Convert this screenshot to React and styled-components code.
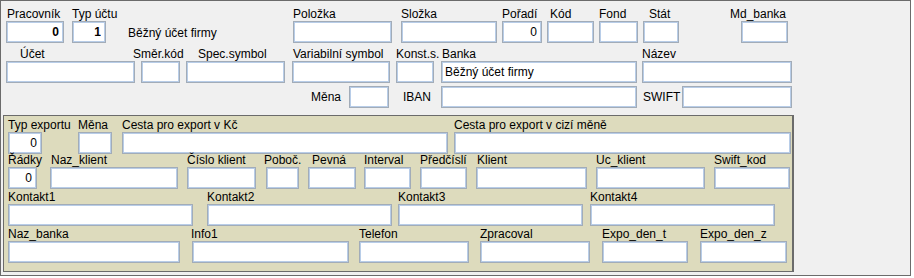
import React from 'react';
import styled, { createGlobalStyle } from 'styled-components';

const Global = createGlobalStyle`
	body {
		margin: 0;
		background: #fff;
		font-family: "Liberation Sans", Arial, sans-serif;
		font-size: 12px;
		color: #000;
	}
`;

const Frame = styled.div`
	box-sizing: border-box;
	width: 911px;
	height: 276px;
	border: 1px solid #6b6b6b;
	background: #f0f0f0;
	padding-top: 6px;
`;

const Row = styled.div`
	display: flex;
	align-items: ${p => (p.$center ? 'center' : 'flex-end')};
	margin-top: ${p => p.$mt || 0}px;
`;

const FieldBox = styled.div`
	display: flex;
	flex-direction: column;
	flex: none;
	width: ${p => p.$w}px;
	margin-left: ${p => p.$ml}px;
`;

const Label = styled.span`
	display: block;
	height: 14px;
	line-height: 14px;
	white-space: nowrap;
	margin-left: ${p => p.$lx || 0}px;
`;

const Input = styled.input`
	box-sizing: border-box;
	width: 100%;
	height: 22px;
	margin: 0;
	padding: 0 ${p => (p.$right ? 4 : 2)}px 0 3px;
	border: 1px solid #a2acb8;
	box-shadow: inset 0 0 0 1px #b8cde8;
	background: #fff;
	outline: none;
	font-family: "Liberation Sans", Arial, sans-serif;
	font-size: 12px;
	font-weight: ${p => (p.$bold ? 700 : 400)};
	color: #000;
	text-align: ${p => (p.$right ? 'right' : 'left')};
`;

const Note = styled.span`
	box-sizing: border-box;
	flex: none;
	width: ${p => p.$w}px;
	height: 22px;
	margin-left: ${p => p.$ml}px;
	padding-top: 5px;
	line-height: 14px;
	white-space: nowrap;
`;

const InlineBox = styled.div`
	display: flex;
	align-items: center;
	flex: none;
	margin-left: ${p => p.$ml}px;
`;

const InlineLabel = styled.span`
	width: ${p => p.$lw}px;
	line-height: 14px;
	white-space: nowrap;
`;

const InlineInput = styled(Input)`
	width: ${p => p.$w}px;
`;

const Panel = styled.div`
	box-sizing: border-box;
	width: 791px;
	height: 157px;
	margin: 7px 0 0 2px;
	padding: 2px 0 0 0;
	border: 1px solid #6b6b6b;
	border-right-width: 2px;
	background: #dddbbd;
`;

function Field({ label, w, ml, lx, value, right, bold }) {
	return (
		<FieldBox $w={w} $ml={ml}>
			<Label $lx={lx}>{label}</Label>
			<Input readOnly defaultValue={value || ''} $right={right} $bold={bold} />
		</FieldBox>
	);
}

function Inline({ label, lw, w, ml }) {
	return (
		<InlineBox $ml={ml}>
			<InlineLabel $lw={lw}>{label}</InlineLabel>
			<InlineInput readOnly defaultValue="" $w={w} />
		</InlineBox>
	);
}

const rowTwo = [
	{ label: 'Účet', ml: 5, w: 129, lx: 14 },
	{ label: 'Směr.kód', ml: 6, w: 39, lx: -8 },
	{ label: 'Spec.symbol', ml: 6, w: 99, lx: 12 },
	{ label: 'Variabilní symbol', ml: 7, w: 98, lx: 1 },
	{ label: 'Konst.s.', ml: 6, w: 38 },
	{ label: 'Banka', ml: 7, w: 196, lx: 1, value: 'Běžný účet firmy' },
	{ label: 'Název', ml: 5, w: 150 },
];

const panelRows = [
	{
		mt: 0,
		fields: [
			{ label: 'Typ exportu', ml: 4, w: 34, value: '0', right: true },
			{ label: 'Měna', ml: 36, w: 34 },
			{ label: 'Cesta pro export v Kč', ml: 10, w: 326 },
			{ label: 'Cesta pro export v cizí měně', ml: 6, w: 337 },
		],
	},
	{
		mt: -1,
		fields: [
			{ label: 'Řádky', ml: 4, w: 29, value: '0', right: true },
			{ label: 'Naz_klient', ml: 13, w: 128, lx: 1 },
			{ label: 'Číslo klient', ml: 9, w: 69 },
			{ label: 'Poboč.', ml: 10, w: 33, lx: -2 },
			{ label: 'Pevná', ml: 9, w: 48, lx: 4 },
			{ label: 'Interval', ml: 8, w: 47 },
			{ label: 'Předčíslí', ml: 9, w: 47 },
			{ label: 'Klient', ml: 9, w: 111, lx: 1 },
			{ label: 'Uc_klient', ml: 9, w: 109 },
			{ label: 'Swift_kod', ml: 9, w: 76 },
		],
	},
	{
		mt: 1,
		fields: [
			{ label: 'Kontakt1', ml: 4, w: 185 },
			{ label: 'Kontakt2', ml: 14, w: 185 },
			{ label: 'Kontakt3', ml: 6, w: 185 },
			{ label: 'Kontakt4', ml: 7, w: 185 },
		],
	},
	{
		mt: 1,
		fields: [
			{ label: 'Naz_banka', ml: 4, w: 172 },
			{ label: 'Info1', ml: 12, w: 157, lx: -1 },
			{ label: 'Telefon', ml: 10, w: 110 },
			{ label: 'Zpracoval', ml: 11, w: 110 },
			{ label: 'Expo_den_t', ml: 12, w: 86 },
			{ label: 'Expo_den_z', ml: 12, w: 87 },
		],
	},
];

export default function App() {
	return (
		<>
			<Global />
			<Frame>
				<Row>
					<Field label="Pracovník" ml={5} w={58} lx={1} value="0" right bold />
					<Field label="Typ účtu" ml={8} w={34} value="1" right bold />
					<Note $ml={22} $w={165}>Běžný účet firmy</Note>
					<Field label="Položka" ml={0} w={99} />
					<Field label="Složka" ml={9} w={96} />
					<Field label="Pořadí" ml={5} w={40} value="0" right />
					<Field label="Kód" ml={5} w={47} lx={3} />
					<Field label="Fond" ml={5} w={39} />
					<Field label="Stát" ml={5} w={36} lx={6} />
					<Field label="Md_banka" ml={62} w={47} lx={-11} />
				</Row>
				<Row $mt={4}>
					{rowTwo.map(f => (
						<Field key={f.label} {...f} />
					))}
				</Row>
				<Row $mt={3} $center>
					<Inline label="Měna" ml={310} lw={38} w={40} />
					<Inline label="IBAN" ml={14} lw={38} w={196} />
					<Inline label="SWIFT" ml={6} lw={39} w={110} />
				</Row>
				<Panel>
					{panelRows.map((r, i) => (
						<Row key={i} $mt={r.mt}>
							{r.fields.map(f => (
								<Field key={f.label} {...f} />
							))}
						</Row>
					))}
				</Panel>
			</Frame>
		</>
	);
}
